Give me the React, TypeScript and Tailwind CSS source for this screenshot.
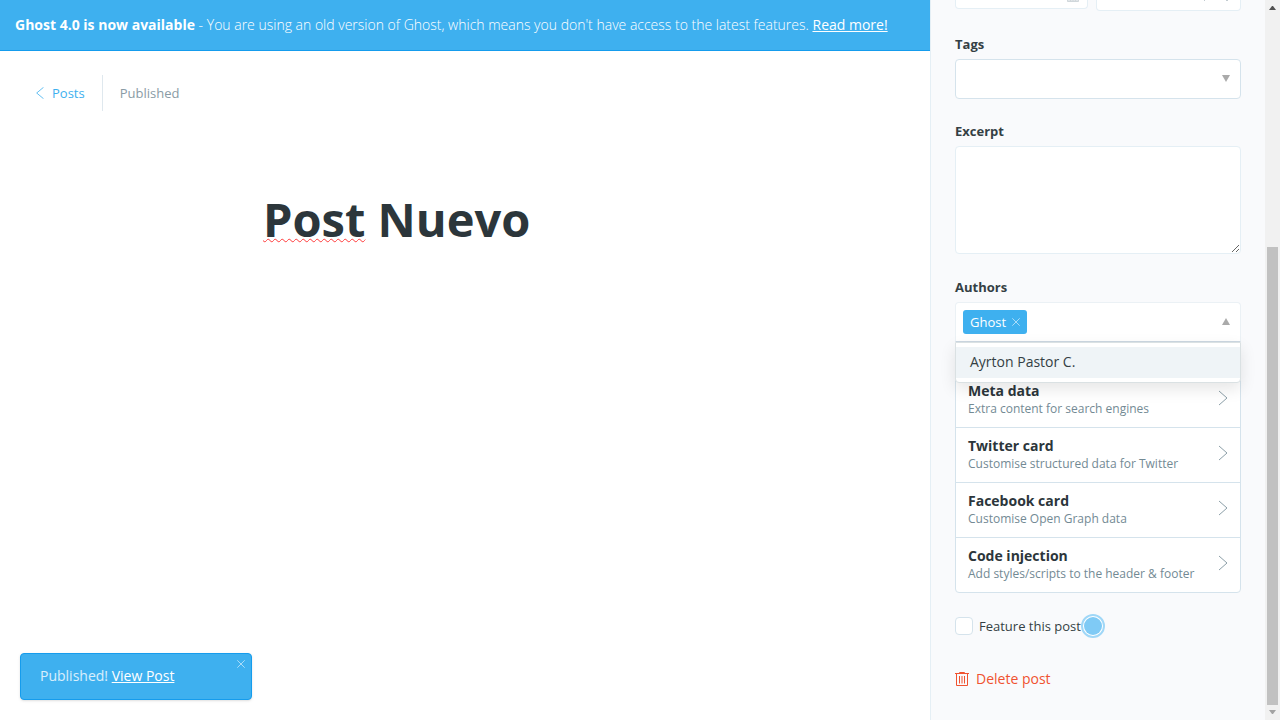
import React from "react";

const sections = [
  { title: "Meta data", text: "Extra content for search engines" },
  { title: "Twitter card", text: "Customise structured data for Twitter" },
  { title: "Facebook card", text: "Customise Open Graph data" },
  { title: "Code injection", text: "Add styles/scripts to the header & footer" },
];

const labelClass = "block text-[13px] leading-5 font-bold text-[#343f44]";

function Cross({ className }: { className: string }) {
  return (
    <svg viewBox="0 0 8 8" className={className} fill="none" stroke="currentColor" strokeWidth="0.7" aria-hidden="true">
      <path d="M.3.3l7.4 7.4M7.7.3L.3 7.7" />
    </svg>
  );
}

function Triangle({ up = false }: { up?: boolean }) {
  return (
    <svg viewBox="0 0 8 7" className="mb-0.5 h-[7px] w-2 shrink-0" fill="#aaaaaa" aria-hidden="true">
      <path d={up ? "M4 0l4 7H0z" : "M0 0h8L4 7z"} />
    </svg>
  );
}

function TrashIcon() {
  return (
    <svg viewBox="0 0 14 14" className="size-3.5" fill="none" stroke="currentColor" aria-hidden="true">
      <path d="M0 1.5h14M4.5 1.5v-1h5v1M1.5 2v11.5h11V2" />
      <path d="M4.5 4v7.5M7 4v7.5M9.5 4v7.5" />
    </svg>
  );
}

function Banner() {
  return (
    <div className="border-b border-[#159ced] bg-[#3eb0ef] px-[15px] py-3.5 text-[14px] leading-[22px] font-light whitespace-nowrap text-white">
      <strong className="font-bold">Ghost 4.0 is now available</strong> - You are using an old version of Ghost, which
      means you don't have access to the latest features.{" "}
      <a href="#upgrade" className="font-medium underline">
        Read more!
      </a>
    </div>
  );
}

function Editor() {
  return (
    <main className="relative flex min-w-0 flex-1 flex-col overflow-hidden bg-white">
      <Banner />
      <header className="flex items-center pt-6 pl-9 text-[13px] leading-5">
        <a href="#posts" className="flex h-9 items-center gap-2 border-r border-[#dfe8ee] pr-[17px] text-[#3eb0ef]">
          <svg viewBox="0 0 8 12" className="h-3 w-2" fill="none" stroke="currentColor" strokeWidth="0.8" aria-hidden="true">
            <path d="M7.5.3L.7 6l6.8 5.7" />
          </svg>
          Posts
        </a>
        <span className="pl-[17px] text-[#8a9ba5]">Published</span>
      </header>
      <div className="pt-[77px] pl-[263px]">
        <h1
          role="textbox"
          aria-label="Post title"
          contentEditable
          suppressContentEditableWarning
          spellCheck={false}
          className="text-[47px] leading-[62px] font-bold text-[#2c363b] outline-none"
        >
          <span className="underline decoration-[#ff3b3b] decoration-wavy decoration-1 underline-offset-1">Post</span> Nuevo
        </h1>
      </div>
      <div
        role="status"
        className="absolute bottom-5 left-5 w-[232px] rounded border border-[#159ced] bg-[#3eb0ef] px-[19px] pt-[11px] pb-[13px] text-[14px] leading-[21px] text-white shadow-sm"
      >
        <span className="text-white/80">Published! </span>
        <a href="#view" className="underline">
          View Post
        </a>
        <button type="button" aria-label="Dismiss" className="absolute top-1.5 right-1.5 flex text-white/80">
          <Cross className="size-2" />
        </button>
      </div>
    </main>
  );
}

function Authors() {
  return (
    <div className="pt-[23px]">
      <label htmlFor="authors" className={labelClass}>
        Authors
      </label>
      <div className="relative mt-[5px]">
        <div className="flex h-10 items-center rounded-t border border-[#ebf1f5] border-b-[#cdd8e2] bg-white pr-2.5 pl-[7px]">
          <span className="flex h-6 items-center gap-1.5 rounded-[3px] bg-[#3eb0ef] px-[7px] text-[13px] leading-5 text-white">
            Ghost
            <button type="button" aria-label="Remove Ghost" className="text-white/80">
              <Cross className="size-2" />
            </button>
          </span>
          <input id="authors" type="text" className="min-w-0 flex-1 outline-none" />
          <Triangle up />
        </div>
        <ul
          role="listbox"
          aria-label="Available authors"
          className="absolute inset-x-0 top-full z-10 rounded-b border border-[#dae1e3] bg-white py-1 shadow-[0_6px_16px_rgba(0,0,0,0.1)]"
        >
          <li role="option" aria-selected="false" className="bg-[#eff4f7] px-3.5 pt-1 pb-1.5 text-[14px] leading-[21px] text-[#343f44]">
            Ayrton Pastor C.
          </li>
        </ul>
      </div>
    </div>
  );
}

function Settings() {
  return (
    <aside className="flex w-[335px] shrink-0 flex-col overflow-hidden border-l border-[#e5eff5] bg-[#f9fafc] px-6">
      <div className="flex h-[11px] shrink-0 items-start gap-2">
        <div className="flex h-[9px] w-[133px] justify-end rounded-b border border-t-0 border-[#e5eff5] bg-white pr-2">
          <svg viewBox="0 0 12 2" className="h-0.5 w-3" stroke="#d0d7db" fill="#e2e6e9" aria-hidden="true">
            <path d="M.5 0v1.5h11V0M3.5 0v1M6 0v1M8.5 0v1" />
          </svg>
        </div>
        <div className="flex h-[11px] flex-1 justify-end rounded-b border border-t-0 border-[#e5eff5] bg-white pr-3">
          <svg viewBox="0 0 24 1" className="h-px w-6" fill="#c3ccd1" aria-hidden="true">
            <path d="M0 0h1v1H0zM22 0h2v1h-2z" />
          </svg>
        </div>
      </div>

      <div className="pt-[23px]">
        <label htmlFor="tags" className={labelClass}>
          Tags
        </label>
        <div className="mt-[5px] flex h-10 items-center rounded border border-[#d5e3ec] bg-white pr-2.5 pl-2">
          <input id="tags" type="text" className="min-w-0 flex-1 outline-none" />
          <Triangle />
        </div>
      </div>

      <div className="pt-[22px]">
        <label htmlFor="excerpt" className={labelClass}>
          Excerpt
        </label>
        <textarea
          id="excerpt"
          className="mt-[5px] block h-[108px] w-full resize rounded border border-[#e5eff5] bg-white p-2 text-[14px] outline-none"
        />
      </div>

      <Authors />

      <ul className="mt-[30px] rounded border border-[#d5e3ec] bg-white">
        {sections.map((section) => (
          <li key={section.title} className="border-b border-[#d5e3ec] last:border-b-0">
            <button type="button" className="flex h-[54px] w-full items-center justify-between px-3 text-left">
              <span className="mb-0.5 flex flex-col">
                <span className="text-[14px] leading-[18px] font-bold text-[#2c363b]">{section.title}</span>
                <span className="text-[12px] leading-[17px] text-[#738a94]">{section.text}</span>
              </span>
              <svg viewBox="0 0 10 16" className="mb-1 h-4 w-2.5" fill="none" stroke="#7f949e" strokeWidth="0.9" aria-hidden="true">
                <path d="M1 1l8 7-8 7" />
              </svg>
            </button>
          </li>
        ))}
      </ul>

      <div className="flex h-[66px] shrink-0 items-center">
        <label className="flex items-center gap-1.5 text-[13px] leading-5 whitespace-nowrap text-[#343f44]">
          <input type="checkbox" className="size-[18px] shrink-0 appearance-none rounded border border-[#d5e3ec] bg-white" />
          Feature this post
        </label>
        <span className="flex size-6 items-center justify-center rounded-full border-2 border-[#a0d7f7] bg-white">
          <span className="size-[18px] rounded-full bg-[#7fcaf5]" />
        </span>
      </div>

      <div className="pt-[9px]">
        <button type="button" className="flex items-center gap-[7px] text-[14px] leading-[21px] text-[#f05230]">
          <TrashIcon />
          Delete post
        </button>
      </div>
    </aside>
  );
}

function ScrollTrack() {
  return (
    <div className="flex w-[15px] shrink-0 flex-col items-center bg-[#f1f1f1]" aria-hidden="true">
      <svg viewBox="0 0 7 4" className="mt-1.5 h-1 w-[7px] shrink-0" fill="#505050">
        <path d="M3 0h1l3 4H0z" />
      </svg>
      <div className="flex-[237]" />
      <div className="w-[11px] flex-[458] bg-[#c1c1c1]" />
      <svg viewBox="0 0 7 4" className="mt-[5px] mb-1.5 h-1 w-[7px] shrink-0" fill="#a3a3a3">
        <path d="M0 0h7L4 4H3z" />
      </svg>
    </div>
  );
}

export default function App() {
  return (
    <div className="flex h-screen overflow-hidden bg-white font-['Open_Sans','Noto_Sans',sans-serif]">
      <Editor />
      <Settings />
      <ScrollTrack />
    </div>
  );
}
